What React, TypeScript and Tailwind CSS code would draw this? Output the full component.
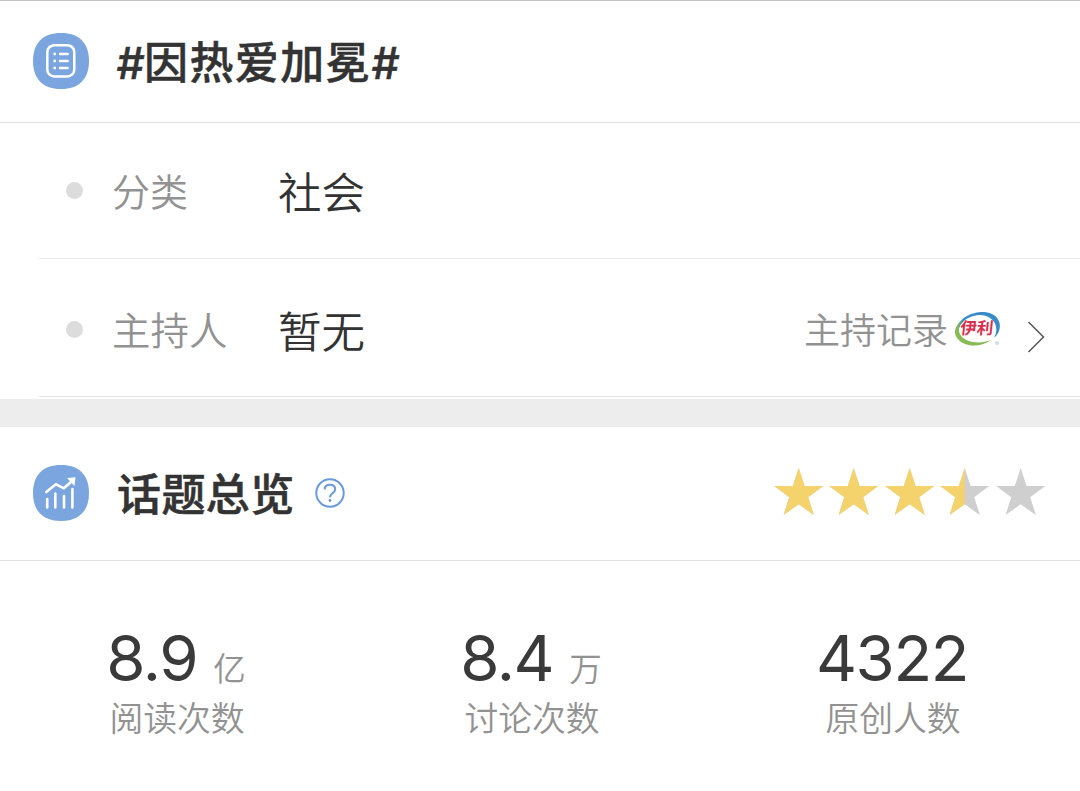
import React from "react";

const STAR =
  "M24.5 0L30.4 18.1H49L34 29.3L39.6 47L24.5 36.3L9.4 47L15 29.3L0 18.1H18.6Z";

const stars = [1, 1, 1, 0.5, 0];

const stats = [
  { value: "8.9", unit: "亿", label: "阅读次数" },
  { value: "8.4", unit: "万", label: "讨论次数" },
  { value: "4322", unit: "", label: "原创人数" },
];

const ListBadge = () => (
  <svg width="56" height="56" viewBox="0 0 56 56" fill="none">
    <path
      d="M28 0C46 0 56 10 56 28S46 56 28 56S0 46 0 28S10 0 28 0Z"
      fill="#7ba5de"
    />
    <rect x="14.3" y="12.2" width="27" height="31.3" rx="7" stroke="#fff" strokeWidth="2.5" />
    <path
      d="M27 21H34.7M27 28H34.7M27 35H34.7"
      stroke="#fff"
      strokeWidth="2.4"
      strokeLinecap="round"
    />
    <circle cx="21.7" cy="21" r="1.4" fill="#fff" />
    <circle cx="21.7" cy="28" r="1.4" fill="#fff" />
    <circle cx="21.7" cy="35" r="1.4" fill="#fff" />
  </svg>
);

const ChartBadge = () => (
  <svg width="56" height="56" viewBox="0 0 56 56" fill="none">
    <path
      d="M28 0C46 0 56 10 56 28S46 56 28 56S0 46 0 28S10 0 28 0Z"
      fill="#7ba5de"
    />
    <path
      d="M13.3 27L22.8 19.2L30.8 23.3L39 16"
      stroke="#fff"
      strokeWidth="2.6"
      strokeLinecap="round"
      strokeLinejoin="round"
    />
    <path d="M34 13L42.5 12.3L41.5 21Z" fill="#fff" />
    <path
      d="M14.2 34V42.5M22.3 28.5V42.5M31 31V42.5M39.4 24V42.5"
      stroke="#fff"
      strokeWidth="2.6"
      strokeLinecap="round"
    />
  </svg>
);

const YiliLogo = () => (
  <svg width="48" height="38" viewBox="0 0 48 38">
    <path
      d="M5 26C-2 14 12 3 27 2C39 1 49 9 45 21C44 24 42 26 40 28C46 17 40 6 27 5C14 5 2 14 5 26Z"
      fill="#3a8cc8"
    />
    <path
      d="M9 9C0 16 -1 24 4 29C10 37 26 38 37 30C27 34 14 33 8 27C3 21 4 15 9 9Z"
      fill="#86bb55"
    />
    <text
      x="7"
      y="24.5"
      fontSize="16.5"
      fontWeight="700"
      fill="#d9304f"
      fontFamily="'Noto Sans CJK SC', sans-serif"
      transform="skewX(-6) translate(1.4 0)"
    >
      伊利
    </text>
    <circle cx="43" cy="33" r="1.3" fill="none" stroke="#a9c6dc" strokeWidth="0.9" />
  </svg>
);

const App = () => {
  return (
    <div className="flex h-[791px] w-[1080px] flex-col overflow-hidden border-t border-[#c4c4c4] bg-white font-['Noto_Sans_CJK_SC',sans-serif] text-[#333]">
      {/* 话题标题 */}
      <div className="flex h-[122px] items-center border-b border-[#e2e2e2] pb-0.5 pl-[33px]">
        <ListBadge />
        <h1 className="mt-0.5 ml-[27px] flex items-baseline text-[44px] leading-none font-medium tracking-[1.4px] [-webkit-text-stroke:0.5px_#333]">
          <span className="w-[28px] font-['Inter'] tracking-normal italic">#</span>
          <span>因热爱加冕</span>
          <span className="font-['Inter'] tracking-normal italic">#</span>
        </h1>
      </div>

      {/* 基本信息 */}
      <div className="pl-[39px]">
        <div className="flex h-[136px] items-center border-b border-[#ebebeb] pl-[27px]">
          <span className="size-[17px] rounded-full bg-[#dcdcdc]" />
          <span className="mb-0.5 ml-[29px] w-[166px] text-[38px] leading-none font-[350] text-[#929292]">
            分类
          </span>
          <span className="text-[43.5px] leading-none font-[350]">社会</span>
        </div>
        <div className="flex h-[138px] items-center border-b border-[#e4e4e4] pt-[3px] pr-[35px] pl-[27px]">
          <span className="size-[17px] rounded-full bg-[#dcdcdc]" />
          <span className="mb-0.5 ml-[29px] w-[166px] text-[38.5px] leading-none font-[350] text-[#929292]">
            主持人
          </span>
          <span className="mt-0.5 text-[43.5px] leading-none font-[350]">暂无</span>
          <div className="ml-auto flex items-center">
            <span className="mr-1.5 mb-0.5 text-[36px] leading-none font-[350] text-[#929292]">
              主持记录
            </span>
            <YiliLogo />
            <svg className="mt-4 ml-[25px]" width="18" height="32" viewBox="0 0 18 32" fill="none">
              <path d="M1.5 1L16.5 16L1.5 31" stroke="#555" strokeWidth="1.5" />
            </svg>
          </div>
        </div>
      </div>

      <div className="mt-0.5 h-7 bg-[#ededed]" />

      {/* 话题总览 */}
      <div className="flex h-[134px] items-center border-b border-[#e2e2e2] pr-[35px] pb-0.5 pl-[33px]">
        <ChartBadge />
        <h2 className="mb-0.5 ml-7 text-[44px] leading-none font-medium tracking-[0.4px] [-webkit-text-stroke:0.6px_#333]">
          话题总览
        </h2>
        <svg className="ml-5" width="30" height="30" viewBox="0 0 30 30" fill="none">
          <circle cx="15" cy="15" r="13.7" stroke="#6a9ada" strokeWidth="2" />
          <path
            d="M9.7 11.6C9.7 8.5 12 6.7 15 6.7C18.1 6.7 20.2 8.5 20.2 11.2C20.2 14.9 15 15 15 19.2"
            stroke="#6a9ada"
            strokeWidth="2"
          />
          <circle cx="15" cy="22.5" r="1.4" fill="#6a9ada" />
        </svg>
        <div className="mb-0.5 ml-auto flex gap-1.5">
          {stars.map((fill, i) => (
            <svg key={i} width="49.4" height="47" viewBox="0 0 49 47">
              <path d={STAR} fill="#cfcfcf" />
              {fill > 0 && (
                <path
                  d={STAR}
                  fill="#f5d36c"
                  style={{ clipPath: `inset(0 ${(1 - fill) * 100}% 0 0)` }}
                />
              )}
            </svg>
          ))}
        </div>
      </div>

      {/* 数据 */}
      <div className="grid grid-cols-[354px_356px_366px] pt-[65px]">
        {stats.map((s) => (
          <div key={s.label} className="flex flex-col items-center">
            <div className="mr-0.5 flex h-16 items-baseline">
              <span className="font-['Inter'] text-[63.5px] leading-[64px] tracking-[-1.4px] text-[#3a3a3a]">
                {s.value}
              </span>
              {s.unit && (
                <span className="ml-4 text-[32.5px] leading-none font-[350] text-[#929292]">
                  {s.unit}
                </span>
              )}
            </div>
            <span className="mt-2.5 text-[33.8px] leading-none font-[350] text-[#929292]">
              {s.label}
            </span>
          </div>
        ))}
      </div>
    </div>
  );
};

export default App;
